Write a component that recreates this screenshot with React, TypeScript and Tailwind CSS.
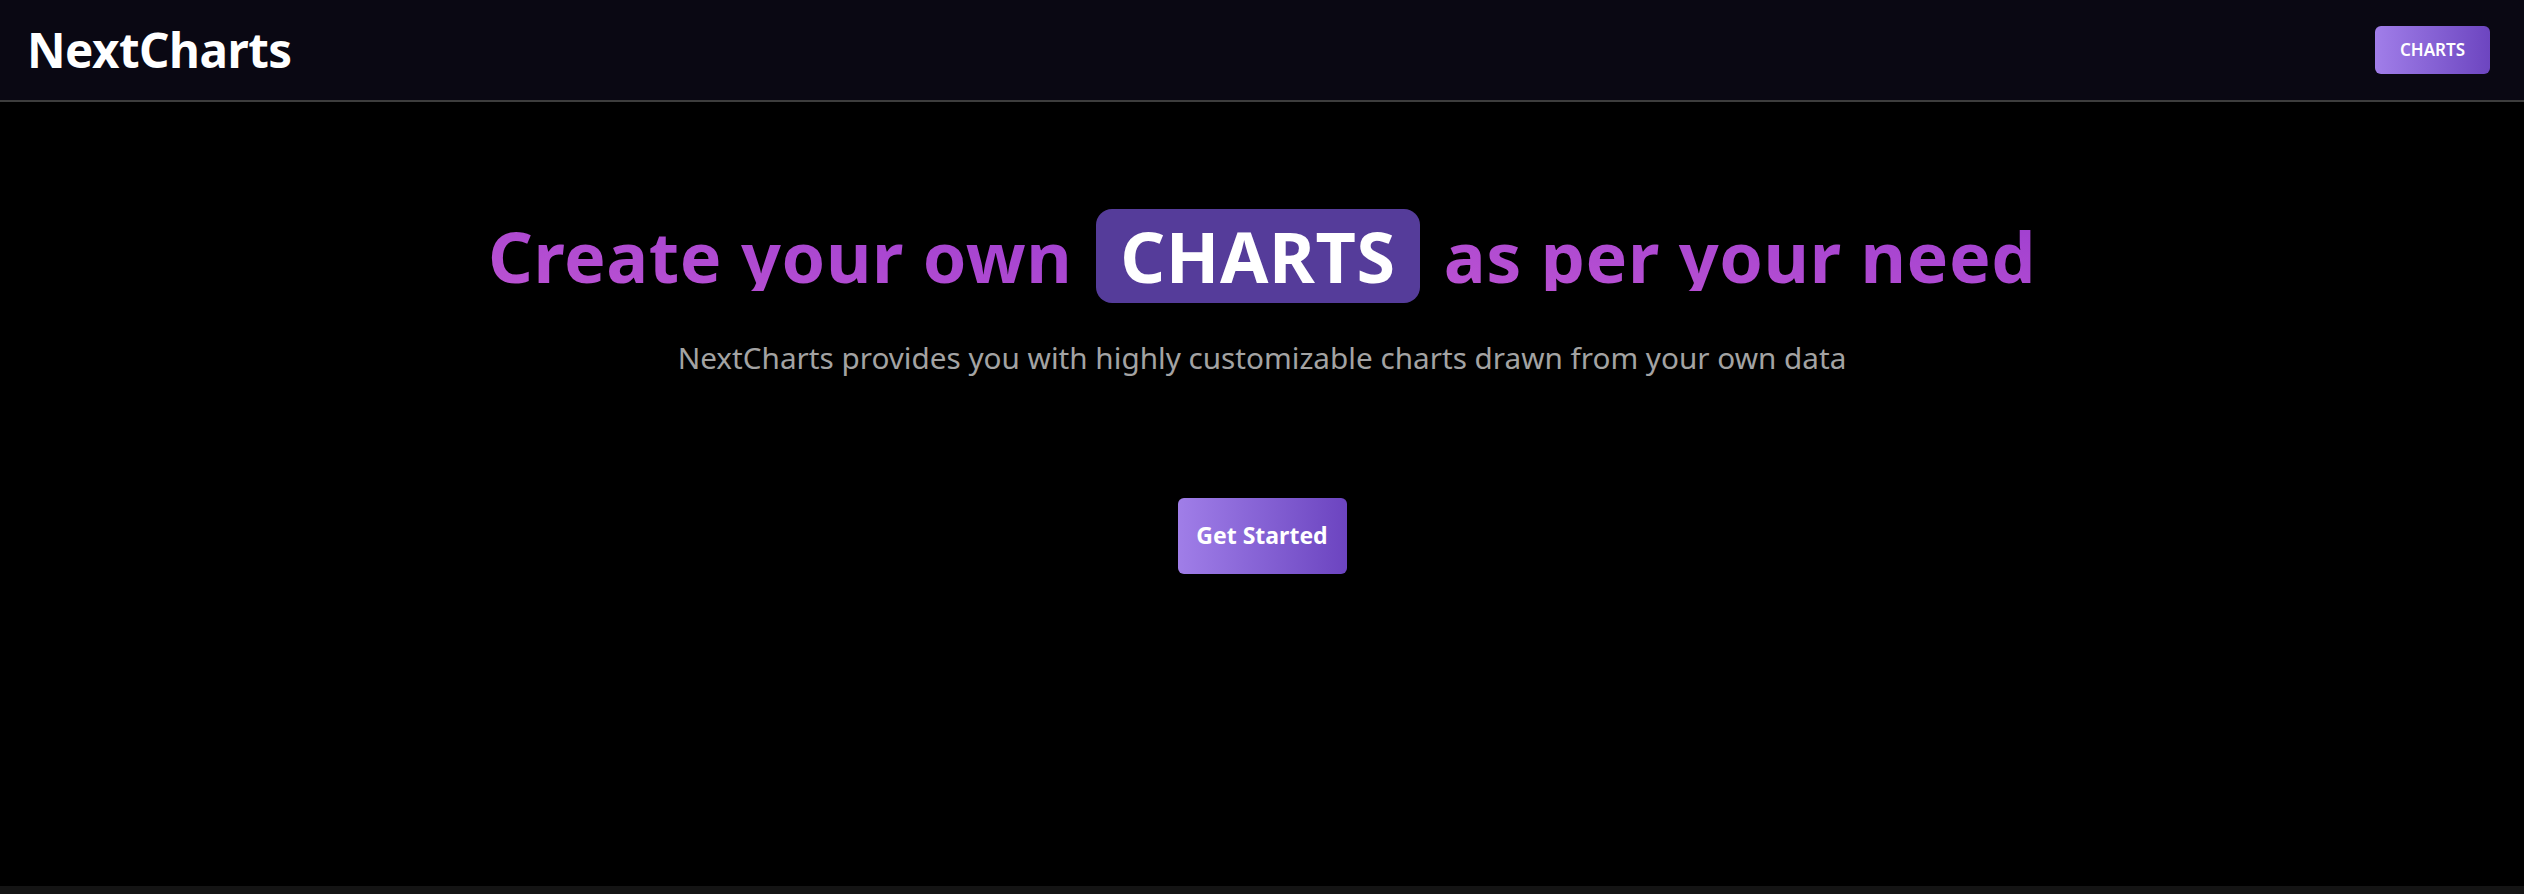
import React from "react";

export default function App() {
  return (
    <div className="flex h-[894px] w-full flex-col bg-black" style={{ fontFamily: '"Noto Sans", "Open Sans", sans-serif' }}>
      <header className="flex h-[102px] shrink-0 items-center justify-between border-b-2 border-[#3d3d3d] bg-[#0a0813] pl-[27px] pr-[34px]">
        <div className="text-[47.5px] font-bold tracking-[-0.5px] text-white">NextCharts</div>
        <button className="flex h-[48px] w-[115px] items-center justify-center rounded-[6px] bg-gradient-to-r from-[#a17ee9] to-[#6d45c0] text-[17px] font-semibold text-white">
          CHARTS
        </button>
      </header>
      <main className="flex flex-1 flex-col items-center bg-black pt-[107px]">
        <h1 className="flex items-center gap-[24px] text-[70px] font-bold leading-none tracking-[0.6px]">
          <span className="bg-gradient-to-tr from-[#bb52d2] to-[#a03fd0] bg-clip-text text-transparent">Create your own</span>
          <span className="flex h-[94px] items-center rounded-[16px] bg-[#553c9a] px-[24px] text-white">CHARTS</span>
          <span className="bg-gradient-to-tr from-[#bb52d2] to-[#a03fd0] bg-clip-text text-transparent">as per your need</span>
        </h1>
        <p className="mt-[33px] text-[29.7px] text-[#a3a3a3]">
          NextCharts provides you with highly customizable charts drawn from your own data
        </p>
        <button className="mt-[117px] flex h-[76px] w-[169px] items-center justify-center rounded-[6px] bg-gradient-to-r from-[#a07ee8] to-[#6c44c0] text-[23px] font-bold text-white">
          Get Started
        </button>
      </main>
      <div className="h-[8px] shrink-0 bg-[#141414]" />
    </div>
  );
}
